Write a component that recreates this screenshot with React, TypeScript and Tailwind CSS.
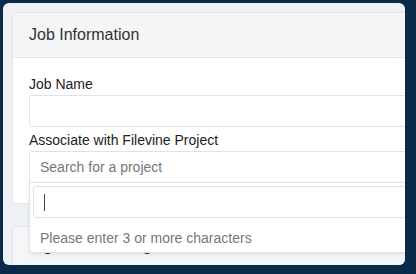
import { FC } from "react";

const font = { fontFamily: '"Liberation Sans", Arial, sans-serif' };

const Field: FC<{ label: string; children: React.ReactNode }> = ({ label, children }) => (
  <div className="flex flex-col">
    <label className="text-[14px] leading-[20px] text-[#222]">{label}</label>
    {children}
  </div>
);

export default function App() {
  return (
    <div
      className="w-[416px] h-[274px] overflow-hidden bg-[#0b2a4a] pt-[3px] pl-[3px] pr-[11px] pb-[9px]"
      style={font}
    >
      <div className="relative h-full overflow-hidden rounded-[6px] bg-[#edf1f5] pt-[9px] pl-[9px]">
        <div className="flex w-[460px] flex-col gap-[22px]">
          <div className="rounded-[4px] border border-[#e2e6ea] bg-white">
            <div className="flex h-[45px] items-center border-b border-[#e2e6ea] bg-[#f5f5f5] px-[16px] text-[16px] text-[#333]">
              Job Information
            </div>
            <div className="flex flex-col gap-[3px] px-[16px] pt-[16px] pb-[20px]">
              <Field label="Job Name">
                <div className="mt-[1px] h-[32px] rounded-[3px] border border-[#dfe3e8] bg-white" />
              </Field>
              <Field label="Associate with Filevine Project">
                <div className="relative mt-[1px]">
                  <div className="flex h-[32px] items-center rounded-t-[3px] border border-[#dfe3e8] bg-white px-[10px] text-[14px] text-[#777]">
                    Search for a project
                  </div>
                  <div className="absolute left-0 right-0 top-[31px] z-10 rounded-b-[3px] border border-[#dfe3e8] bg-white shadow-[0_2px_4px_rgba(0,0,0,0.08)]">
                    <div className="p-[3px]">
                      <div className="flex h-[32px] items-center rounded-[3px] border border-[#dfe3e8] px-[10px]">
                        <span className="h-[17px] w-px bg-[#444]" />
                      </div>
                    </div>
                    <div className="px-[10px] pt-[7px] pb-[4px] text-[14px] leading-[20px] text-[#777]">
                      Please enter 3 or more characters
                    </div>
                  </div>
                </div>
              </Field>
            </div>
          </div>
          <div className="h-[80px] rounded-[4px] border border-[#e2e6ea] bg-[#f5f6f7] px-[16px] pt-[9px] text-[16px] leading-[20px] text-[#333]">
            Signature Settings
          </div>
        </div>
      </div>
    </div>
  );
}
